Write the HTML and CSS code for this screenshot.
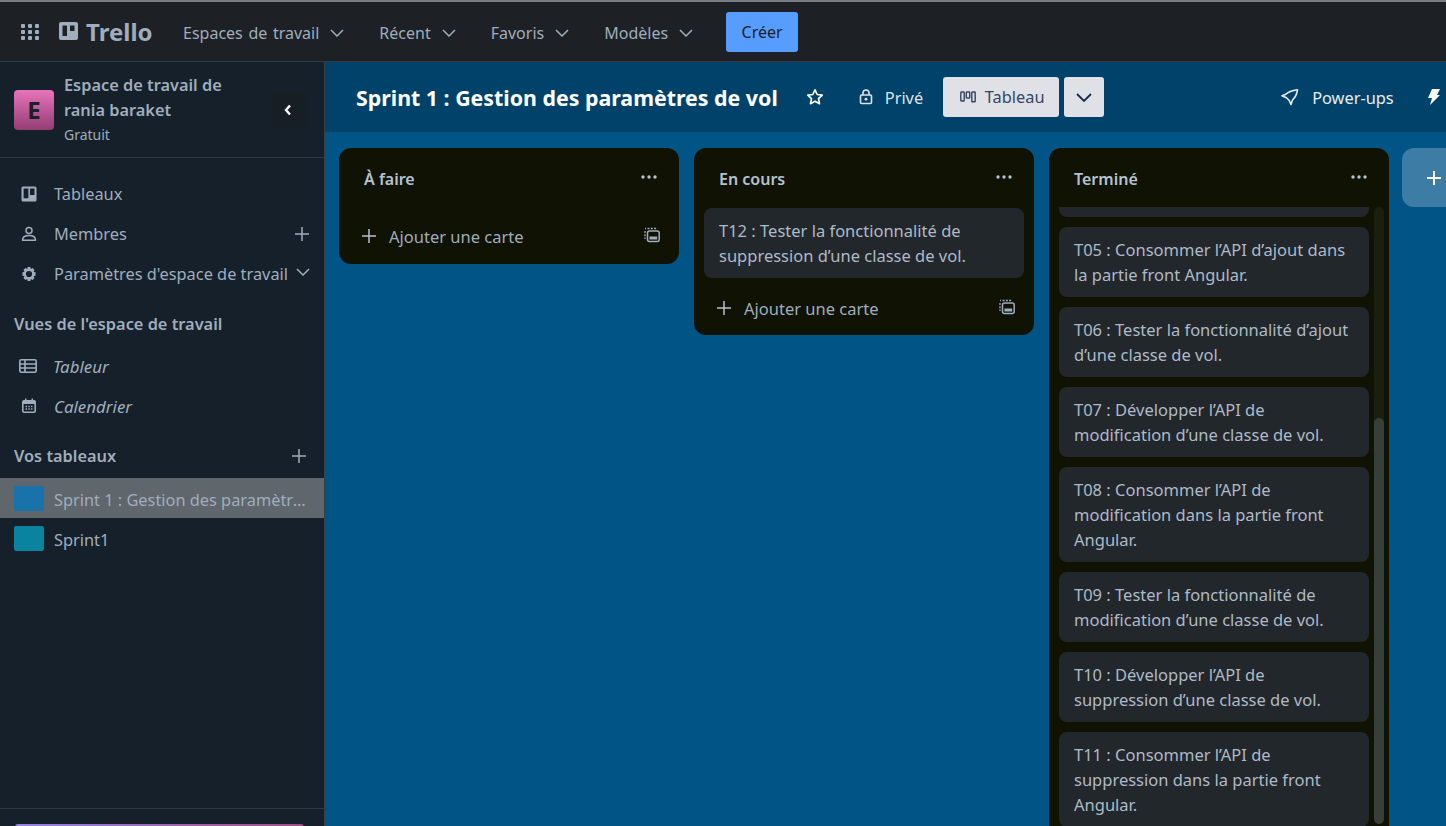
FILE: index.html
```html
<!DOCTYPE html>
<html lang="fr">
<head>
<meta charset="utf-8">
<title>Sprint 1 : Gestion des paramètres de vol | Trello</title>
<link rel="stylesheet" href="styles.css">
</head>
<body>
<header class="topbar">
  <svg class="apps" viewBox="0 0 18 18" width="18" height="18"><g fill="currentColor"><rect x="0" y="1" width="4" height="4" rx="1"/><rect x="7" y="1" width="4" height="4" rx="1"/><rect x="14" y="1" width="4" height="4" rx="1"/><rect x="0" y="7" width="4" height="4" rx="1"/><rect x="7" y="7" width="4" height="4" rx="1"/><rect x="14" y="7" width="4" height="4" rx="1"/><rect x="0" y="13" width="4" height="4" rx="1"/><rect x="7" y="13" width="4" height="4" rx="1"/><rect x="14" y="13" width="4" height="4" rx="1"/></g></svg>
  <div class="logo">
    <svg viewBox="0 0 19 18" width="19" height="18"><path fill="currentColor" fill-rule="evenodd" d="M2 0h15a2 2 0 0 1 2 2v14a2 2 0 0 1-2 2H2a2 2 0 0 1-2-2V2a2 2 0 0 1 2-2zm2 3.500a.5.500 0 0 0-.5.5v9.500a.5.500 0 0 0 .5.500h3.500a.5.500 0 0 0 .5-.5V4a.5.500 0 0 0-.5-.5zm7.500 0a.5.500 0 0 0-.5.5v4.500a.5.500 0 0 0 .5.500H15a.5.500 0 0 0 .5-.5V4a.5.500 0 0 0-.5-.5z"/></svg>
    <span>Trello</span>
  </div>
  <nav class="menu">
    <span class="menu-item">Espaces de travail <svg class="chev" viewBox="0 0 14 8" width="14" height="8"><path d="M1 1l6 6 6-6" fill="none" stroke="currentColor" stroke-width="1.500"/></svg></span>
    <span class="menu-item">Récent <svg class="chev" viewBox="0 0 14 8" width="14" height="8"><path d="M1 1l6 6 6-6" fill="none" stroke="currentColor" stroke-width="1.500"/></svg></span>
    <span class="menu-item">Favoris <svg class="chev" viewBox="0 0 14 8" width="14" height="8"><path d="M1 1l6 6 6-6" fill="none" stroke="currentColor" stroke-width="1.500"/></svg></span>
    <span class="menu-item">Modèles <svg class="chev" viewBox="0 0 14 8" width="14" height="8"><path d="M1 1l6 6 6-6" fill="none" stroke="currentColor" stroke-width="1.500"/></svg></span>
  </nav>
  <button class="create">Créer</button>
</header>

<div class="layout">
  <aside class="sidebar">
    <div class="ws">
      <div class="avatar">E</div>
      <div class="ws-text">
        <div class="ws-name">Espace de travail de rania baraket</div>
        <div class="ws-plan">Gratuit</div>
      </div>
      <button class="collapse"><svg viewBox="0 0 8 12" width="8" height="12"><path d="M6 1.500L2 6l4 4.500" fill="none" stroke="currentColor" stroke-width="2.400"/></svg></button>
    </div>
    <div class="side-body">
      <div class="side-row">
        <svg class="side-icon" viewBox="0 0 16 16" width="16" height="16"><path fill="currentColor" fill-rule="evenodd" d="M2 .5h12a1.500 1.500 0 0 1 1.500 1.500v12a1.500 1.500 0 0 1-1.500 1.500H2A1.500 1.500 0 0 1 .5 14V2A1.500 1.500 0 0 1 2 .5zm.6 2v9.800h4.800V2.500zm6.400 0v6.500h4.500V2.500z"/></svg>
        <span class="side-label">Tableaux</span>
      </div>
      <div class="side-row">
        <svg class="side-icon" viewBox="0 0 16 16" width="16" height="16"><g fill="none" stroke="currentColor" stroke-width="1.500"><circle cx="8" cy="4.500" r="3"/><path d="M1.500 14.200c0-3 2.500-4.700 6.500-4.700s6.500 1.700 6.500 4.700z" stroke-linejoin="round"/></g></svg>
        <span class="side-label">Membres</span>
        <svg class="side-plus" viewBox="0 0 16 16" width="16" height="16"><path d="M8 1v14M1 8h14" stroke="currentColor" stroke-width="1.500"/></svg>
      </div>
      <div class="side-row">
        <svg class="side-icon" viewBox="0 0 16 16" width="16" height="16"><path fill="currentColor" fill-rule="evenodd" d="M6.700 1h2.600l.5 2 1.800-1 1.900 1.900-1 1.800 2 .6v3.400l-2 .5 1 1.800-1.900 1.900-1.800-1-.5 2H6.700l-.5-2-1.800 1-1.900-1.900 1-1.800-2-.5V6.300l2-.6-1-1.800L4.400 2l1.800 1zM8 4.900a3.100 3.100 0 1 0 0 6.200 3.100 3.100 0 0 0 0-6.200z"/></svg>
        <span class="side-label">Paramètres d'espace de travail</span>
        <svg class="side-chev" viewBox="0 0 14 8" width="14" height="8"><path d="M1 1l6 6 6-6" fill="none" stroke="currentColor" stroke-width="1.500"/></svg>
      </div>
      <div class="side-title side-title-views">Vues de l'espace de travail</div>
      <div class="side-row">
        <svg class="side-icon side-icon-wide" viewBox="0 0 18 14" width="18" height="14"><g fill="none" stroke="currentColor" stroke-width="1.600"><rect x=".8" y=".8" width="16.400" height="12.400" rx="1.500"/><path d="M.8 5h16.400M.8 9h16.400M6 1v12"/></g></svg>
        <span class="side-label side-em">Tableur</span>
      </div>
      <div class="side-row">
        <svg class="side-icon" viewBox="0 0 16 16" width="16" height="16"><path fill="currentColor" fill-rule="evenodd" d="M4 .5h1.500V2h5V.5H12V2h1a2 2 0 0 1 2 2v9a2 2 0 0 1-2 2H3a2 2 0 0 1-2-2V4a2 2 0 0 1 2-2h1zM2.600 6v7c0 .3.200.4.400.4h10c.2 0 .4-.1.400-.4V6zM4.500 7.800h1.500v1.500H4.500zm2.800 0h1.500v1.500H7.300zm2.700 0h1.500v1.500H10zm-5.500 2.500h1.500v1.500H4.500zm2.800 0h1.500v1.500H7.300zm2.700 0h1.500v1.500H10z"/></svg>
        <span class="side-label side-em">Calendrier</span>
      </div>
      <div class="side-title side-title-boards">
        <span>Vos tableaux</span>
        <svg class="board-plus" viewBox="0 0 16 16" width="16" height="16"><path d="M8 1v14M1 8h14" stroke="currentColor" stroke-width="1.500"/></svg>
      </div>
      <div class="board-row active"><span class="swatch swatch-blue"></span><span class="board-name">Sprint 1 : Gestion des paramètres de vol</span></div>
      <div class="board-row"><span class="swatch swatch-teal"></span><span class="board-name">Sprint1</span></div>
    </div>
    <div class="side-foot"><div class="upgrade"></div></div>
  </aside>

  <main class="board">
    <div class="board-head">
      <h1 class="board-title">Sprint 1 : Gestion des paramètres de vol</h1>
      <svg class="star" viewBox="0 0 18 18" width="18" height="18"><path d="M9 1.800l2.200 4.700 5 .6-3.700 3.500 1 5.100L9 13.200l-4.500 2.500 1-5.100L1.800 7.100l5-.6z" fill="none" stroke="currentColor" stroke-width="1.700" stroke-linejoin="round"/></svg>
      <div class="private">
        <svg viewBox="0 0 14 16" width="14" height="16"><g fill="none" stroke="currentColor" stroke-width="1.600"><rect x="1.500" y="6" width="11" height="8.500" rx="1"/><path d="M4 6V4a3 3 0 0 1 6 0v2"/></g><circle cx="7" cy="10.200" r="1.400" fill="currentColor"/></svg>
        <span>Privé</span>
      </div>
      <button class="view-btn">
        <svg viewBox="0 0 16 12" width="16" height="12"><g fill="none" stroke="currentColor" stroke-width="1.400"><rect x=".8" y="1" width="3.400" height="9" rx=".6"/><rect x="6.300" y="1" width="3.400" height="6" rx=".6"/><rect x="11.800" y="1" width="3.400" height="9.800" rx=".6"/></g></svg>
        Tableau
      </button>
      <button class="view-drop"><svg viewBox="0 0 16 9" width="16" height="9"><path d="M1 1l7 7 7-7" fill="none" stroke="currentColor" stroke-width="1.800"/></svg></button>
      <div class="head-spacer"></div>
      <div class="powerups">
        <svg viewBox="0 0 18 18" width="18" height="18"><path d="M16.500 1.800C11 2.500 7 4 4.500 6.500L1 7.800l4.500 2 2.700 2.700L10 16.500l1.500-4.500C14.500 9 16 6 16.500 1.800z" fill="none" stroke="currentColor" stroke-width="1.600" stroke-linejoin="round"/></svg>
        <span>Power-ups</span>
      </div>
      <svg class="bolt" viewBox="0 0 12 16" width="12" height="16"><path fill="currentColor" d="M4 0h8L9 6h3L2 16l2-7H0z"/></svg>
    </div>

    <div class="lists">
      <section class="list">
        <div class="list-head"><span>À faire</span><svg class="dots" viewBox="0 0 16 4" width="16" height="4"><g fill="currentColor"><circle cx="2" cy="2" r="1.700"/><circle cx="8" cy="2" r="1.700"/><circle cx="14" cy="2" r="1.700"/></g></svg></div>
        <div class="list-foot list-foot-empty">
          <svg class="add-plus" viewBox="0 0 16 16" width="16" height="16"><path d="M8 1v14M1 8h14" stroke="currentColor" stroke-width="1.500"/></svg>
          <span class="add-label">Ajouter une carte</span>
          <svg class="tpl" viewBox="0 0 16 16" width="16" height="16"><path d="M3.500 1.500h9M1 4v8M1 1.500h1" fill="none" stroke="currentColor" stroke-width="1.300" stroke-dasharray="2 1.300"/><rect x="3.500" y="4" width="11.700" height="10.500" rx="2" fill="none" stroke="currentColor" stroke-width="1.500"/><rect x="5.500" y="9.500" width="7.700" height="3" fill="currentColor"/></svg>
        </div>
      </section>

      <section class="list">
        <div class="list-head"><span>En cours</span><svg class="dots" viewBox="0 0 16 4" width="16" height="4"><g fill="currentColor"><circle cx="2" cy="2" r="1.700"/><circle cx="8" cy="2" r="1.700"/><circle cx="14" cy="2" r="1.700"/></g></svg></div>
        <div class="cards">
          <article class="card">T12 : Tester la fonctionnalité de suppression d’une classe de vol.</article>
        </div>
        <div class="list-foot">
          <svg class="add-plus" viewBox="0 0 16 16" width="16" height="16"><path d="M8 1v14M1 8h14" stroke="currentColor" stroke-width="1.500"/></svg>
          <span class="add-label">Ajouter une carte</span>
          <svg class="tpl" viewBox="0 0 16 16" width="16" height="16"><path d="M3.500 1.500h9M1 4v8M1 1.500h1" fill="none" stroke="currentColor" stroke-width="1.300" stroke-dasharray="2 1.300"/><rect x="3.500" y="4" width="11.700" height="10.500" rx="2" fill="none" stroke="currentColor" stroke-width="1.500"/><rect x="5.500" y="9.500" width="7.700" height="3" fill="currentColor"/></svg>
        </div>
      </section>

      <section class="list list-long">
        <div class="list-head"><span>Terminé</span><svg class="dots" viewBox="0 0 16 4" width="16" height="4"><g fill="currentColor"><circle cx="2" cy="2" r="1.700"/><circle cx="8" cy="2" r="1.700"/><circle cx="14" cy="2" r="1.700"/></g></svg></div>
        <div class="scroll-area">
          <div class="cards cards-scrolled">
            <article class="card card-clipped"></article>
            <article class="card">T05 : Consommer l’API d’ajout dans la partie front Angular.</article>
            <article class="card">T06 : Tester la fonctionnalité d’ajout d’une classe de vol.</article>
            <article class="card">T07 : Développer l’API de modification d’une classe de vol.</article>
            <article class="card">T08 : Consommer l’API de modification dans la partie front Angular.</article>
            <article class="card">T09 : Tester la fonctionnalité de modification d’une classe de vol.</article>
            <article class="card">T10 : Développer l’API de suppression d’une classe de vol.</article>
            <article class="card">T11 : Consommer l’API de suppression dans la partie front Angular.</article>
          </div>
          <div class="track"><div class="thumb"></div></div>
        </div>
      </section>

      <button class="add-list"><svg viewBox="0 0 16 16" width="16" height="16"><path d="M8 1v14M1 8h14" stroke="currentColor" stroke-width="2"/></svg></button>
    </div>
  </main>
</div>
</body>
</html>
```
FILE: styles.css
```css
* { box-sizing: border-box; }
html, body { margin: 0; height: 100%; overflow: hidden; }
body {
  font-family: "Noto Sans", "Liberation Sans", sans-serif;
  font-size: 16.35px;
  color: #9fadbc;
  background: #1d2125;
  display: flex;
  flex-direction: column;
  border-top: 2px solid #7a7d80;
}
button { font: inherit; border: 0; padding: 0; }
svg { flex: none; display: block; }

.topbar {
  height: 60px;
  flex: none;
  display: flex;
  align-items: center;
  padding-left: 21px;
  background: #1d2125;
  border-bottom: 1px solid #34393f;
}
.apps { color: #9fadbc; }
.logo { display: flex; align-items: center; gap: 8px; margin-left: 20px; width: 124px; }
.logo svg { margin-top: -1px; }
.logo span { font-size: 24px; font-weight: 700; line-height: 1; color: #9fadbc; }
.menu { display: flex; gap: 35px; padding-top: 2px; font-size: 16px; word-spacing: 1.5px; }
.menu-item { display: flex; align-items: center; gap: 11px; }
.create {
  margin-left: 33px;
  width: 72px;
  height: 40px;
  font-size: 16px;
  background: #579dff;
  color: #1d2125;
  border-radius: 3px;
}

.layout { flex: 1; display: flex; min-height: 0; }

.sidebar {
  width: 325px;
  flex: none;
  display: flex;
  flex-direction: column;
  background: #16202a;
  border-right: 1px solid #34414c;
}
.ws {
  height: 96px;
  flex: none;
  display: flex;
  align-items: center;
  padding: 0 18px 0 14px;
  border-bottom: 1px solid #2e3840;
}
.avatar {
  width: 40px;
  height: 40px;
  flex: none;
  border-radius: 4px;
  background: linear-gradient(#e774bb, #943d73);
  color: #1d2125;
  font-size: 24px;
  font-weight: 700;
  display: flex;
  align-items: center;
  justify-content: center;
}
.ws-text { margin-left: 10px; width: 190px; padding-bottom: 2px; }
.ws-name { font-weight: 600; line-height: 25px; }
.ws-plan { font-size: 14px; line-height: 20px; margin-top: 2px; }
.collapse {
  margin-left: auto;
  width: 34px;
  height: 35px;
  padding-right: 2px;
  background: #171e24;
  color: #fff;
  border-radius: 3px;
  display: flex;
  align-items: center;
  justify-content: center;
}
.side-body { flex: 1; padding-top: 16px; }
.side-row { height: 40px; display: flex; align-items: center; padding: 0 14px 0 21px; }
.side-icon-wide { margin-left: -2px; margin-right: -1px; }
.side-label { margin-left: 17px; white-space: nowrap; }
.side-em { font-style: italic; font-size: 16.9px; }
.side-plus { margin-left: auto; }
.side-chev { margin-left: auto; margin-top: -4px; }
.side-title { font-weight: 600; line-height: 24px; padding-left: 14px; }
.side-title-views { margin-top: 18px; margin-bottom: 10px; }
.side-title-boards {
  margin-top: 18px;
  margin-bottom: 10px;
  display: flex;
  align-items: center;
  justify-content: space-between;
  padding-right: 17px;
}
.board-row { height: 40px; display: flex; align-items: center; padding: 0 14px; }
.board-row.active { background: #5f666c; }
.swatch { width: 30px; height: 25px; flex: none; border-radius: 2px; }
.swatch-blue { background: #1a72aa; }
.swatch-teal { background: #0a839f; }
.board-name { margin-left: 10px; padding-top: 3px; white-space: nowrap; overflow: hidden; text-overflow: ellipsis; }
.side-foot { height: 18px; flex: none; border-top: 1px solid #2e3840; padding: 15px 20px 0 15px; overflow: hidden; }
.upgrade { height: 20px; border-radius: 3px 3px 0 0; background: linear-gradient(90deg, #9585e3, #a04f85); }

.board { flex: 1; min-width: 0; display: flex; flex-direction: column; background: #005486; overflow: hidden; }
.board-head {
  height: 70px;
  flex: none;
  display: flex;
  align-items: center;
  padding-left: 31px;
  background: #00426a;
  color: #fff;
  white-space: nowrap;
}
.board-title { margin: 0; font-size: 21.35px; font-weight: 700; flex: none; }
.star { margin-left: 28px; }
.private { display: flex; align-items: center; gap: 12px; margin-left: 35px; color: #dfe1e6; flex: none; }
.private span { padding-top: 2px; }
.view-btn {
  margin-left: 20px;
  width: 116px;
  height: 40px;
  flex: none;
  padding-left: 2px;
  border-radius: 3px;
  background: #dfe1e6;
  color: #344563;
  display: flex;
  align-items: center;
  justify-content: center;
  gap: 9px;
}
.view-drop {
  margin-left: 5px;
  width: 40px;
  height: 40px;
  flex: none;
  border-radius: 3px;
  background: #dfe1e6;
  color: #172b4d;
  display: flex;
  align-items: center;
  justify-content: center;
}
.head-spacer { width: 177px; flex: none; }
.powerups { display: flex; align-items: center; gap: 13px; color: #e9ecf0; flex: none; }
.powerups span { padding-top: 2px; }
.bolt { margin-left: 34px; }

.lists { flex: 1; min-height: 0; display: flex; align-items: flex-start; gap: 15px; padding: 16px 0 0 14px; }
.list {
  width: 340px;
  flex: none;
  background: #101204;
  border-radius: 12px;
  display: flex;
  flex-direction: column;
}
.list-long { height: 700px; border-radius: 12px 12px 0 0; }
.list-head {
  height: 60px;
  flex: none;
  display: flex;
  align-items: center;
  justify-content: space-between;
  padding: 2px 22px 0 25px;
  font-size: 16px;
  font-weight: 600;
  color: #b6c2cf;
}
.dots { color: #b6c2cf; margin-top: -4px; }
.cards { display: flex; flex-direction: column; gap: 10px; padding: 0 10px; }
.card {
  background: #22272b;
  border-radius: 8px;
  padding: 10px 15px;
  font-size: 16.5px;
  line-height: 25px;
  color: #aebac7;
}
.list-foot { height: 57px; display: flex; align-items: center; padding: 3px 19px 0 22px; }
.list-foot-empty { height: 56px; padding-top: 0; }
.add-plus { color: #b6c2cf; }
.add-label { margin-left: 12px; font-size: 16.5px; }
.tpl { margin-left: auto; margin-top: -2px; }
.scroll-area { flex: 1; min-height: 0; display: flex; overflow: hidden; margin-top: -1px; }
.cards-scrolled { flex: none; width: 330px; padding-right: 10px; margin-top: -49px; }
.card-clipped { height: 59px; flex: none; }
.track { width: 10px; margin-left: -5px; height: 617px; background: #1b1f11; border-radius: 5px; display: flex; flex-direction: column; justify-content: flex-end; }
.thumb { height: 406px; background: #36403a; border-radius: 5px; }
.add-list {
  width: 60px;
  height: 59px;
  flex: none;
  margin-left: -2px;
  border-radius: 12px;
  background: #3d7da5;
  color: #fff;
  display: flex;
  align-items: center;
  padding-left: 24px;
}
```
